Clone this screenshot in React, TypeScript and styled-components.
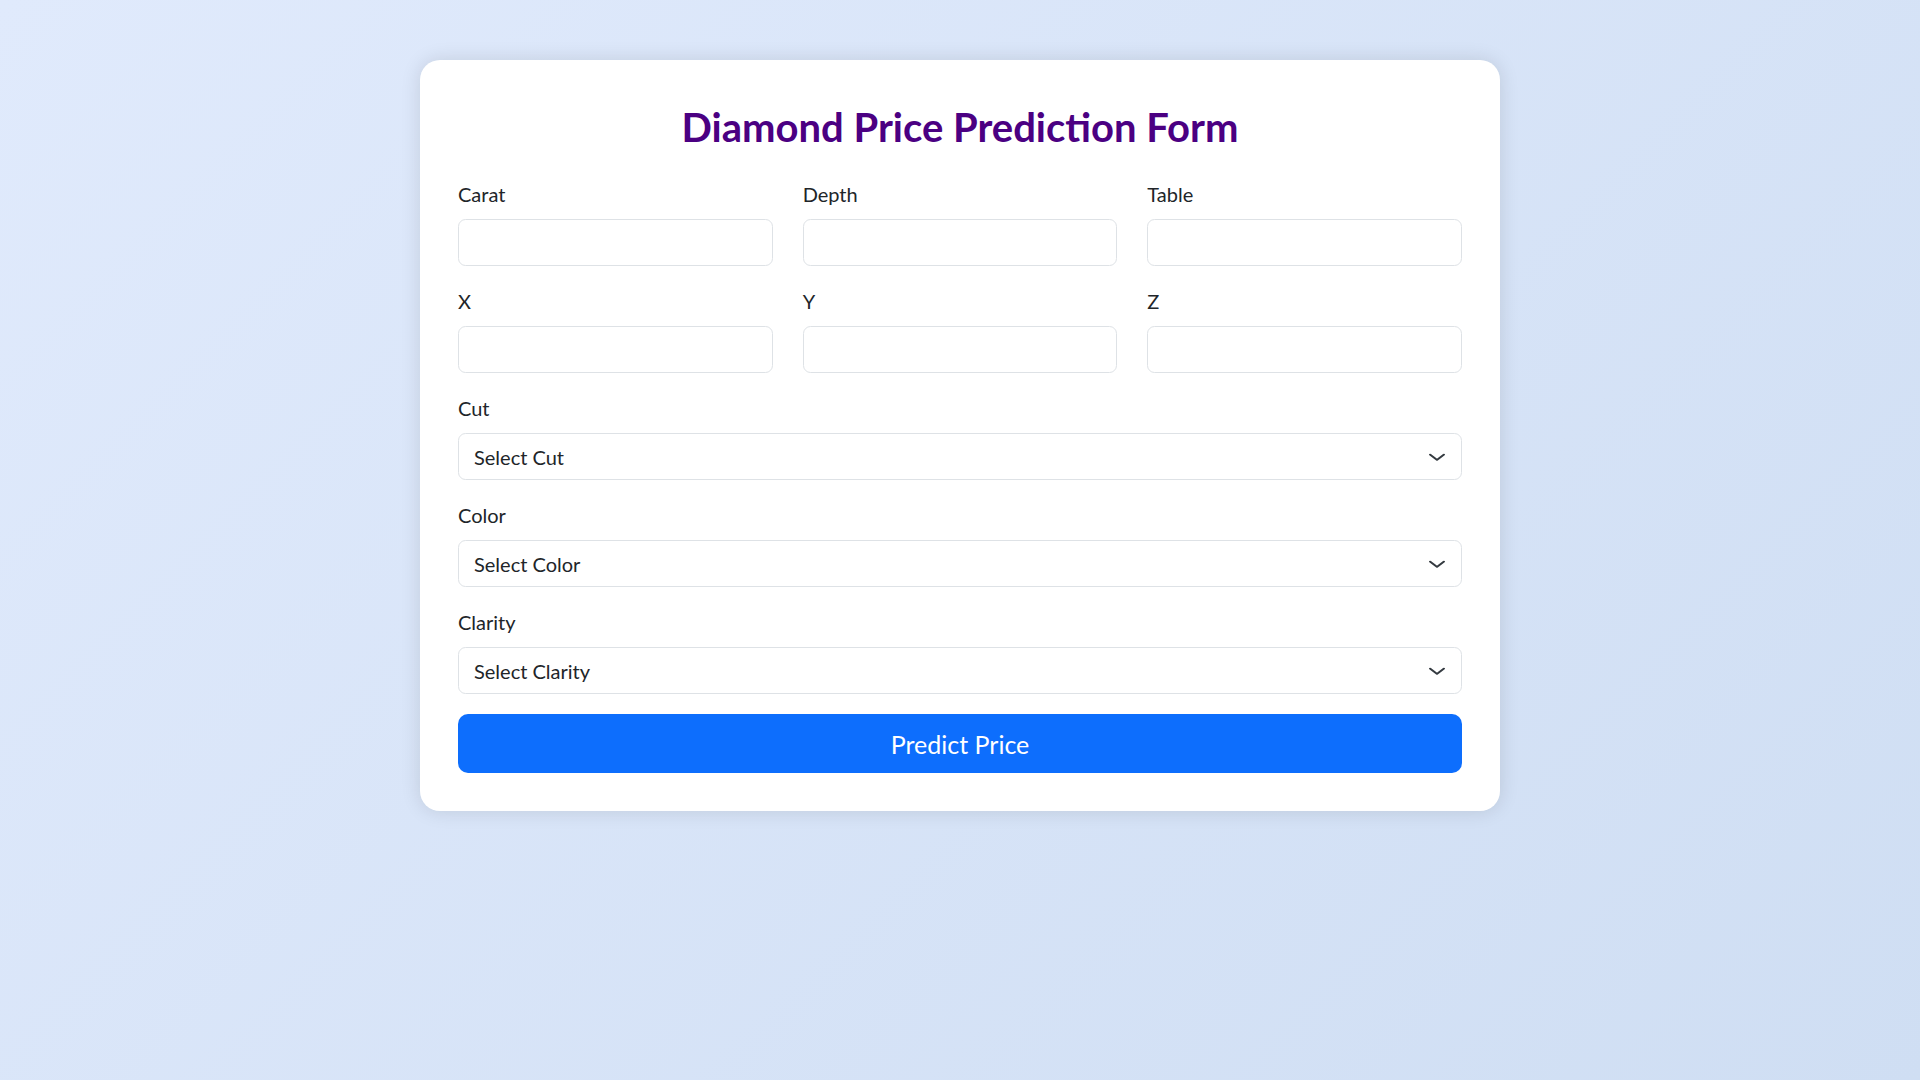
import React from "react";
import styled, { createGlobalStyle } from "styled-components";

const GlobalStyle = createGlobalStyle`
  html, body { margin: 0; padding: 0; }
  body {
    min-height: 1080px;
    font-family: Lato, "Noto Sans", sans-serif;
    background: linear-gradient(135deg, #e0eafc, #cfdef3);
    color: #212529;
  }
  * { box-sizing: border-box; }
`;

const Page = styled.div`
  min-height: 1080px;
  display: flex;
  justify-content: center;
  align-items: flex-start;
  padding-top: 60px;
`;

const Card = styled.form`
  width: 1080px;
  background: #ffffff;
  border-radius: 20px;
  box-shadow: 0 0 20px rgba(0, 0, 0, 0.12);
  padding: 43px 38px 38px;
  display: flex;
  flex-direction: column;
`;

const Title = styled.h2`
  margin: 0 0 28px;
  font-size: 40px;
  line-height: 48px;
  font-weight: 700;
  color: #4b0082;
  text-align: center;
`;

const Grid = styled.div`
  display: grid;
  grid-template-columns: repeat(3, 1fr);
  column-gap: 30px;
  row-gap: 20px;
  margin-bottom: 20px;
`;

const Field = styled.div`
  display: flex;
  flex-direction: column;
`;

const Stack = styled.div`
  display: flex;
  flex-direction: column;
  gap: 20px;
  margin-bottom: 20px;
`;

const Label = styled.label`
  font-size: 20px;
  line-height: 30px;
  margin-bottom: 10px;
  color: #212529;
`;

const Input = styled.input`
  height: 47px;
  width: 100%;
  border: 1px solid #dee2e6;
  border-radius: 7.5px;
  padding: 0 15px;
  font-size: 20px;
  font-family: inherit;
  color: #212529;
  background: #fff;
  outline: none;
`;

const SelectWrap = styled.div`
  position: relative;
`;

const Select = styled.select`
  appearance: none;
  -webkit-appearance: none;
  height: 47px;
  width: 100%;
  border: 1px solid #dee2e6;
  border-radius: 7.5px;
  padding: 0 50px 0 15px;
  font-size: 20px;
  font-family: inherit;
  color: #212529;
  background: #fff;
  outline: none;
`;

const Chevron = styled.svg`
  position: absolute;
  right: 15px;
  top: 50%;
  width: 20px;
  height: 15px;
  transform: translateY(-50%);
  pointer-events: none;
`;

const Button = styled.button`
  height: 59px;
  width: 100%;
  border: none;
  border-radius: 10px;
  background: #0d6efd;
  color: #fff;
  font-size: 25px;
  font-family: inherit;
  cursor: pointer;
`;

const numeric = ["Carat", "Depth", "Table", "X", "Y", "Z"];
const selects = ["Cut", "Color", "Clarity"];

export default function App() {
  return (
    <>
      <GlobalStyle />
      <Page>
        <Card onSubmit={(e) => e.preventDefault()}>
          <Title>Diamond Price Prediction Form</Title>
          <Grid>
            {numeric.map((n) => (
              <Field key={n}>
                <Label>{n}</Label>
                <Input type="text" />
              </Field>
            ))}
          </Grid>
          <Stack>
            {selects.map((s) => (
              <Field key={s}>
                <Label>{s}</Label>
                <SelectWrap>
                  <Select defaultValue="">
                    <option value="">Select {s}</option>
                  </Select>
                  <Chevron viewBox="0 0 16 16" preserveAspectRatio="none">
                    <path
                      d="m2.5 5.5 5.5 5.5 5.5-5.5"
                      fill="none"
                      stroke="#343a40"
                      strokeWidth="1.8"
                      strokeLinecap="round"
                      strokeLinejoin="round"
                    />
                  </Chevron>
                </SelectWrap>
              </Field>
            ))}
          </Stack>
          <Button type="submit">Predict Price</Button>
        </Card>
      </Page>
    </>
  );
}
